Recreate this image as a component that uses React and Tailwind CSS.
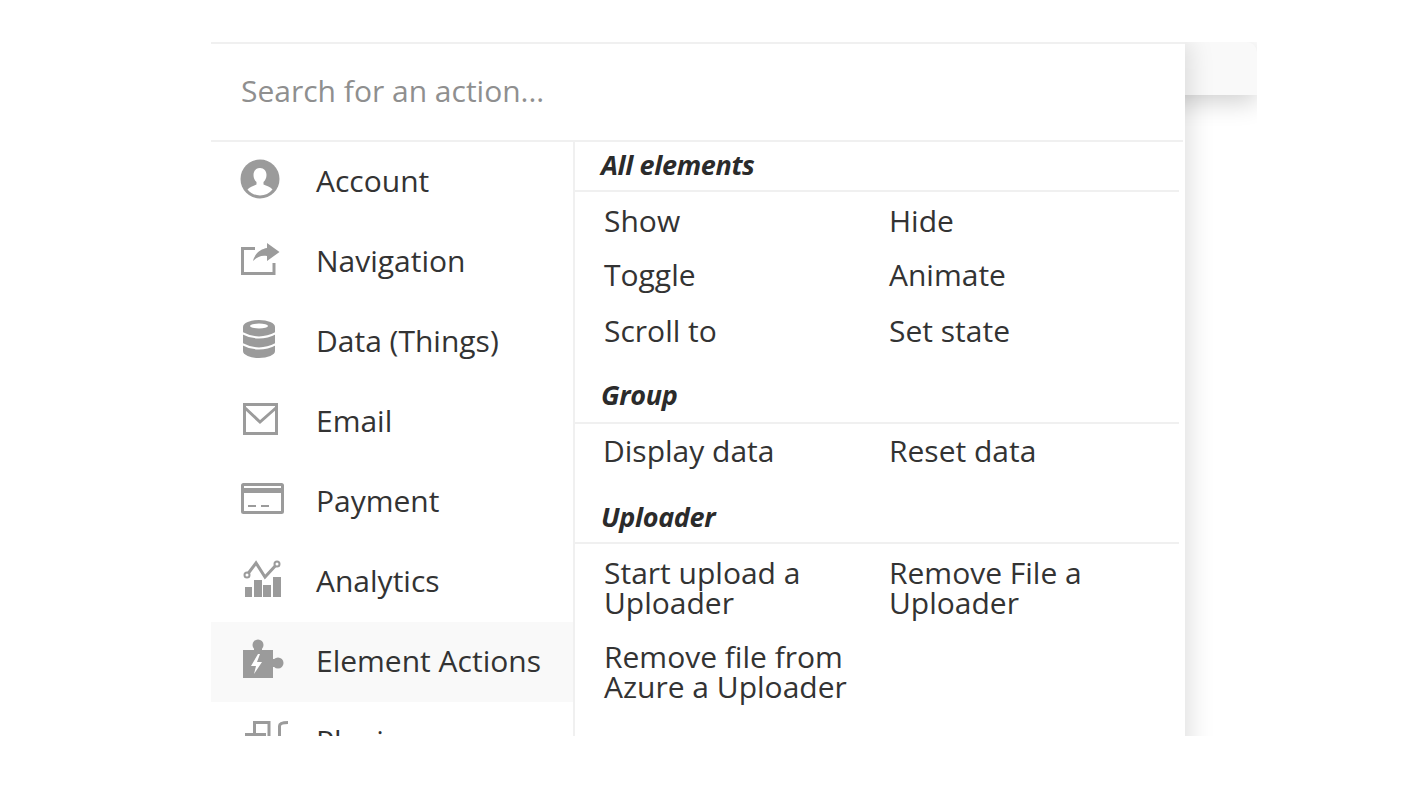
const iconClass = "w-[44px] h-[44px] shrink-0 overflow-visible";
const Account = () => (
  <svg viewBox="0 0 44 44" className={iconClass}>
    <circle cx="20" cy="19" r="19.500" fill="#9b9b9b" />
    <path d="M20 8c4 0 6.500 3 6.500 7 0 3-1.300 5.500-3 7v2.500c3 1.300 7 2.500 9 5A16.500 16.500 0 0 1 20 35.500a16.500 16.500 0 0 1-12.500-6c2-2.500 6-3.700 9-5V22c-1.700-1.500-3-4-3-7 0-4 2.500-7 6.500-7z" fill="#fff" />
  </svg>
);
const Share = () => (
  <svg viewBox="0 0 44 44" className={iconClass}>
    <path d="M15 8.500H2.500V33.500H34V23" fill="none" stroke="#9b9b9b" strokeWidth="3" />
    <path d="M27 3L39.500 12 27 21V16C21 15 17 17 13 21 15 13 21 9 27 8Z" fill="#9b9b9b" />
  </svg>
);
const Database = () => (
  <svg viewBox="0 0 44 44" className={iconClass}>
    <path d="M3 7a16 7 0 0 1 32 0v24a16 7 0 0 1-32 0z" fill="#9b9b9b" />
    <ellipse cx="19" cy="6" rx="9" ry="2.500" fill="#fff" />
    <path d="M2 13Q19 22 36 13M2 24Q19 33 36 24" fill="none" stroke="#fff" strokeWidth="2" />
  </svg>
);
const Mail = () => (
  <svg viewBox="0 0 44 44" className={iconClass}>
    <rect x="4.500" y="4.500" width="32" height="29" fill="none" stroke="#9b9b9b" strokeWidth="3" />
    <path d="M4 7l16 15L37 7" fill="none" stroke="#9b9b9b" strokeWidth="3" />
  </svg>
);
const Card = () => (
  <svg viewBox="0 0 44 44" className={iconClass}>
    <rect x="2.500" y="4.500" width="40" height="28" rx="1" fill="none" stroke="#9b9b9b" strokeWidth="3" />
    <rect x="3" y="8" width="39" height="5" fill="#9b9b9b" />
    <rect x="8" y="25" width="8" height="2" fill="#9b9b9b" />
    <rect x="21" y="25" width="8" height="2" fill="#9b9b9b" />
  </svg>
);
const Chart = () => (
  <svg viewBox="0 0 44 44" className={iconClass}>
    <rect x="5" y="27" width="7" height="10" fill="#9b9b9b" />
    <rect x="14" y="20" width="8" height="17" fill="#9b9b9b" />
    <rect x="23" y="25" width="8" height="12" fill="#9b9b9b" />
    <rect x="33" y="17" width="8" height="20" fill="#9b9b9b" />
    <path d="M7 15L16 3l9 14L37 4" fill="none" stroke="#9b9b9b" strokeWidth="3" />
    <circle cx="37" cy="4" r="2.500" fill="#fff" stroke="#9b9b9b" strokeWidth="2" />
    <circle cx="7" cy="15" r="2.500" fill="#fff" stroke="#9b9b9b" strokeWidth="2" />
  </svg>
);
const Puzzle = () => (
  <svg viewBox="0 0 44 44" className={iconClass}>
    <rect x="3" y="10" width="30" height="28" fill="#9b9b9b" />
    <rect x="14" y="5" width="8" height="6" fill="#9b9b9b" />
    <circle cx="18" cy="5" r="5.500" fill="#9b9b9b" />
    <rect x="32" y="19" width="6" height="8" fill="#9b9b9b" />
    <circle cx="38" cy="23" r="5.500" fill="#9b9b9b" />
    <path d="M18 14l-7 12h5l-2 8 8-12h-5l3-8z" fill="#fff" />
  </svg>
);
const Plugin = () => (
  <svg viewBox="0 0 44 44" className={iconClass}>
    <rect x="5" y="13" width="21" height="6" fill="#9b9b9b" />
    <path d="M14.500 13V2.500H29V19" fill="none" stroke="#9b9b9b" strokeWidth="3" />
    <path d="M39.500 19V6c0-2 2-3.500 8.500-3.500" fill="none" stroke="#9b9b9b" strokeWidth="3" />
  </svg>
);

const cats = [
  ["Account", Account],
  ["Navigation", Share],
  ["Data (Things)", Database],
  ["Email", Mail],
  ["Payment", Card],
  ["Analytics", Chart],
  ["Element Actions", Puzzle],
  ["Plugins", Plugin],
];

const Heading = ({ children, className }) => (
  <div className={"pl-[26px] mr-[6px] border-b-2 border-[#f0f0f0] font-bold italic text-[#2b2b2b] text-[27px] tracking-[-0.35px] " + className}>
    {children}
  </div>
);

const Item = ({ children, className = "" }) => (
  <div className={"w-[285px] leading-[30px] " + className}>{children}</div>
);

export default function App() {
  return (
    <div className="h-[790px] bg-white pt-[42px] pl-[211px] font-['Open_Sans',sans-serif]">
      <div className="relative w-[1046px] h-[694px] overflow-hidden">
        <div className="absolute left-[900px] top-0 right-0 h-[53px] rounded-tr-[10px] bg-[#f9f9f9] shadow-[0_6px_26px_rgba(0,0,0,0.2)]" />
        <div className="absolute left-0 top-0 w-[974px] h-[740px] bg-white border-t-2 border-[#f0f0f0] shadow-[4px_0_24px_rgba(0,0,0,0.13)]">
          <div className="h-[98px] flex items-center pl-[30px] pb-[3px] border-b-2 border-[#f0f0f0] mr-[2px] text-[30px] text-[#8f8f8f]">
            Search for an action...
          </div>
          <div className="flex">
            <div className="w-[364px] shrink-0 border-r-2 border-[#f0f0f0] h-[620px]">
              {cats.map(([name, Icon]) => (
                <div
                  key={name}
                  className={"h-[80px] flex items-center pl-[29px] text-[30px] text-[#333333] " + (name === "Element Actions" ? "bg-[#f9f9f9]" : "")}
                >
                  <Icon />
                  <span className="ml-[32px] mb-[4px]">{name}</span>
                </div>
              ))}
            </div>
            <div className="flex-1 text-[30px] text-[#333333]">
              <Heading className="h-[50px] leading-[46px]">All elements</Heading>
              <div className="flex flex-wrap pl-[29px] pt-[14px]">
                <Item className="h-[54px]">Show</Item>
                <Item className="h-[54px]">Hide</Item>
                <Item className="h-[56px]">Toggle</Item>
                <Item className="h-[56px]">Animate</Item>
                <Item className="h-[40px]">Scroll to</Item>
                <Item className="h-[40px]">Set state</Item>
              </div>
              <Heading className="h-[47px] leading-[36px] mt-[21px]">Group</Heading>
              <div className="flex pl-[28px] pt-[12px]">
                <Item className="h-[44px]">Display data</Item>
                <Item className="h-[44px] ml-[1px]">Reset data</Item>
              </div>
              <Heading className="h-[44px] leading-[34px] mt-[20px]">Uploader</Heading>
              <div className="flex flex-wrap pl-[29px] pt-[14px]">
                <Item className="h-[84px]">Start upload a<br />Uploader</Item>
                <Item className="h-[84px]">Remove File a<br />Uploader</Item>
                <Item>Remove file from<br />Azure a Uploader</Item>
              </div>
            </div>
          </div>
        </div>
      </div>
    </div>
  );
}
